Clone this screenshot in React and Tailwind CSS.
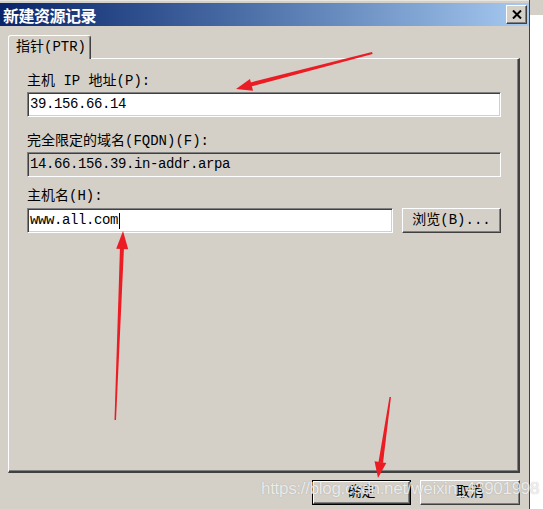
import React from "react";

const FONT = { fontFamily: '"Liberation Mono", "Noto Sans CJK SC", monospace' };

function Sunken({ className = "", children }) {
  return (
    <div
      className={
        "h-[25px] border border-t-[#808080] border-l-[#808080] border-b-white border-r-white shadow-[inset_1px_1px_0_#404040,inset_-1px_-1px_0_#d4d0c8] flex items-center pl-[2px] text-[14px] tracking-[-0.4px] text-black " +
        className
      }
    >
      {children}
    </div>
  );
}

function RaisedButton({ className = "", children, def = false }) {
  const inner = (
    <div className="w-full h-full border border-t-white border-l-white border-b-[#404040] border-r-[#404040] shadow-[inset_-1px_-1px_0_#808080] flex items-center justify-center text-[14px] text-black">
      {children}
    </div>
  );
  if (def) {
    return <div className={"border border-black " + className}>{inner}</div>;
  }
  return <div className={className}>{inner}</div>;
}

export default function App() {
  return (
    <div className="relative w-[543px] h-[509px] bg-white overflow-hidden flex items-start" style={FONT}>
      <div className="w-[530px] h-[509px] shrink-0 bg-[#d4d0c8] border-r border-[#404040] flex flex-col">
        <div className="h-[3px] border-t border-[#e8e6e1]" />
        <div className="h-[23px] bg-gradient-to-r from-[#0a246a] to-[#a6caf0] flex items-center justify-between pl-[3px] pr-[2px]">
          <span
            className="text-white font-bold text-[16px] leading-none tracking-[-0.5px]"
            style={{ fontFamily: '"Noto Sans CJK SC", sans-serif' }}
          >
            新建资源记录
          </span>
          <div className="w-[21px] h-[19px] bg-[#d4d0c8] border border-t-white border-l-white border-b-[#404040] border-r-[#404040] shadow-[inset_-1px_-1px_0_#808080] flex items-center justify-center">
            <svg width="10" height="9" viewBox="0 0 10 9">
              <path d="M1 0.5 L9 8.5 M9 0.5 L1 8.5" stroke="#000" strokeWidth="2" />
            </svg>
          </div>
        </div>
        <div className="pl-[8px] pt-[9px]">
          <div className="relative z-10 w-[83px] h-[24px] -mb-[1px] bg-[#d4d0c8] border-t border-l border-white border-r border-r-[#404040] rounded-t-[3px] shadow-[inset_-1px_0_0_#808080] flex items-center pl-[7px] text-[14px] text-black">
            指针(PTR)
          </div>
          <div className="w-[512px] h-[415px] border-t border-l border-white border-r-2 border-b-2 border-r-[#404040] border-b-[#404040] shadow-[inset_-1px_-1px_0_#808080] pl-[18px] pt-[14px] flex flex-col text-[14px] text-black">
            <div className="h-[16px] leading-[16px]">主机 IP 地址(P):</div>
            <Sunken className="mt-[3px] w-[474px] bg-white">39.156.66.14</Sunken>
            <div className="mt-[16px] h-[16px] leading-[16px]">完全限定的域名(FQDN)(F):</div>
            <Sunken className="mt-[3px] w-[474px] bg-[#d4d0c8]">14.66.156.39.in-addr.arpa</Sunken>
            <div className="mt-[11px] h-[16px] leading-[16px]">主机名(H):</div>
            <div className="mt-[4px] flex gap-[9px]">
              <Sunken className="w-[366px] bg-white">
                <span>www.all.com</span>
                <span className="inline-block w-[1px] h-[16px] bg-black ml-[1px]" />
              </Sunken>
              <RaisedButton className="w-[99px] h-[25px]">浏览(B)...</RaisedButton>
            </div>
          </div>
        </div>
        <div className="mt-[7px] flex justify-end gap-[9px] pr-[9px]">
          <RaisedButton def className="w-[99px] h-[25px]">确定</RaisedButton>
          <RaisedButton className="w-[100px] h-[25px]">取消</RaisedButton>
        </div>
      </div>
      <div className="flex-1 h-[15px] bg-[#d4d0c8]" />

      <svg className="absolute left-0 top-0 pointer-events-none" width="543" height="509" viewBox="0 0 543 509">
        <g fill="#ec1c24" stroke="none">
          <polygon points="372,52 372.6,54 251,86.5 250.5,82.5" />
          <polygon points="236,89 253,90.7 250,79.1" />
          <polygon points="114.5,420 116,420 124,247 120,247" />
          <polygon points="123,231 128.2,249.3 116.2,248.7" />
          <polygon points="389.5,397 391,397 383,463 378.5,462" />
          <polygon points="378,478 386.3,463.1 374.5,461.3" />
        </g>
      </svg>
      <div
        className="absolute left-[261px] top-[480px] text-[17px] leading-none tracking-[-0.3px] text-white/80 pointer-events-none whitespace-nowrap"
        style={{ fontFamily: '"Liberation Sans", Arial, sans-serif', textShadow: "0 0 1px rgba(110,110,110,0.6)" }}
      >
        https://blog.csdn.net/weixin_43901998
      </div>
    </div>
  );
}
